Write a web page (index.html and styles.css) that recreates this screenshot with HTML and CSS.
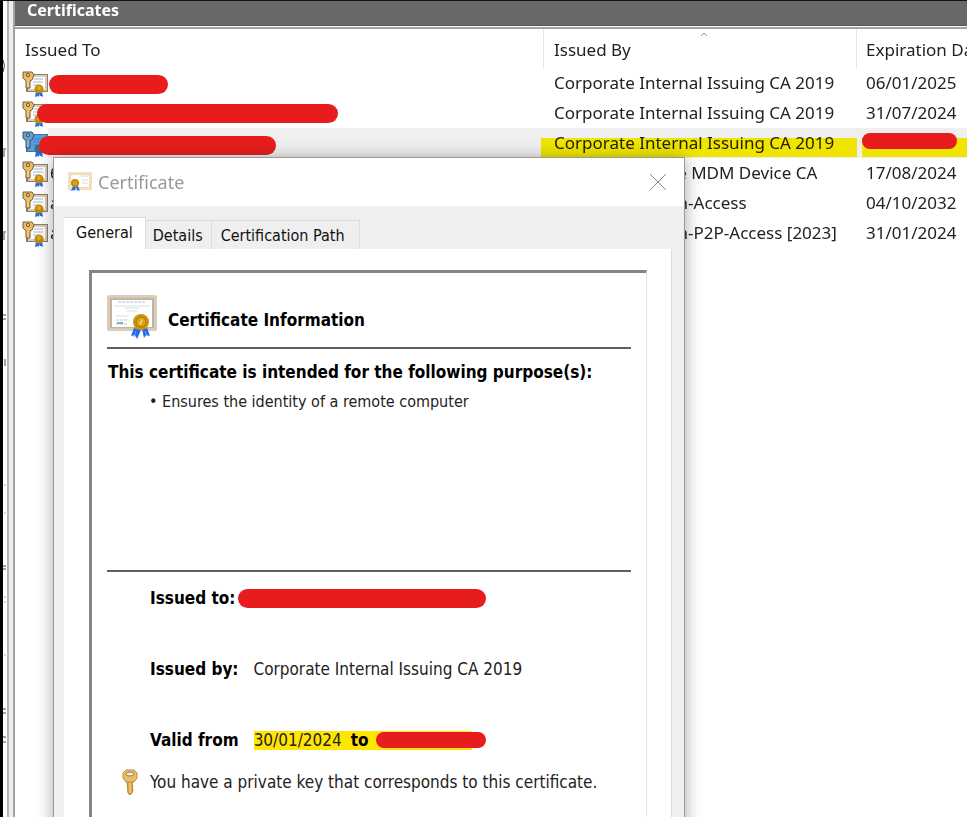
FILE: index.html
```html
<!DOCTYPE html>
<html lang="en">
<head>
    <meta charset="UTF-8">
    <meta name="viewport" content="width=device-width, initial-scale=1.0">
    <title>Certificates</title>
    <link rel="stylesheet" href="styles.css">
</head>
<body>
    <!-- shared icons -->
    <svg class="sprite" aria-hidden="true">
        <symbol id="icon-key-cert" viewBox="0 0 26 26">
            <path d="M4 3h22v18H4z" fill="#8f7c69"/>
            <path d="M6 4h19v16H6z" fill="#d9ccbd"/>
            <path d="M8 6h15v12H8z" fill="#fff"/>
            <path d="M12 8h9M11 11h10M11 14h5" stroke="#9fb9d4"/>
            <path d="M14 20l-1 6 3-1 1 1 1-5zM17 20l1 5 1 0 2 1-1-6z" fill="#1f6fe8"/>
            <circle cx="17" cy="18" r="4.500" fill="#c68a06"/>
            <circle cx="17" cy="17" r="2" fill="#e0ac25"/>
            <path d="M1 1h9l2 3-2 5-2 1v7H4v-7L1 7z" fill="#e9bd62" stroke="#7a5d38"/>
            <path d="M6 10v6" stroke="#f7dc94"/>
            <circle cx="6" cy="4" r="2" fill="#6b5030"/>
            <circle cx="6" cy="4" r="1" fill="#f8e6b0"/>
        </symbol>
        <symbol id="icon-key-cert-selected" viewBox="0 0 26 26">
            <path d="M4 3h22v18H4z" fill="#3a73b0"/>
            <path d="M6 4h19v16H6z" fill="#5c9be0"/>
            <path d="M12 8h9M11 11h10M11 14h5" stroke="#3f80c8"/>
            <path d="M14 20l-1 6 3-1 1 1 1-5zM17 20l1 5 1 0 2 1-1-6z" fill="#1f6fe8"/>
            <circle cx="17" cy="18" r="4.500" fill="#4d6578"/>
            <path d="M1 1h9l2 3-2 5-2 1v7H4v-7L1 7z" fill="#6f9cc0" stroke="#2f5578"/>
            <path d="M6 10v6" stroke="#a9cbe6"/>
            <circle cx="6" cy="4" r="2" fill="#2f5578"/>
            <circle cx="6" cy="4" r="1" fill="#a9cbe6"/>
        </symbol>
    </svg>

    <aside class="tree-edge" aria-hidden="true">
        <svg viewBox="0 0 4 816">
            <path d="M0 59q3 5 0 12M0 148h3M1 149v7M0 231h3M1 232v7M0 314h3M0 318h3M2 358v7M0 565h3M0 568h3M0 708h3M0 712h3M0 736h3M0 741h3" fill="none" stroke="#444"/>
            <path d="M1 484h2M1 512h2M1 596h2M1 601h2M1 654h2" stroke="#c9a36a"/>
        </svg>
    </aside>
    <div class="splitter"></div>

    <main class="pane">
        <h1 class="pane-title">Certificates</h1>
        <table class="cert-list">
            <colgroup>
                <col>
                <col class="col-by">
                <col class="col-date">
            </colgroup>
            <thead>
                <tr>
                    <th>Issued To</th>
                    <th>Issued By
                        <svg class="sort" viewBox="0 0 8 5" aria-hidden="true"><path d="M1 4l3-3 3 3" fill="none" stroke="#999"/></svg>
                    </th>
                    <th>Expiration Date</th>
                </tr>
            </thead>
            <tbody>
                <tr>
                    <td><svg class="icon"><use href="#icon-key-cert"/></svg><span class="redact to-1"></span></td>
                    <td>Corporate Internal Issuing CA 2019</td>
                    <td>06/01/2025</td>
                </tr>
                <tr>
                    <td><svg class="icon"><use href="#icon-key-cert"/></svg><span class="redact to-2"></span></td>
                    <td>Corporate Internal Issuing CA 2019</td>
                    <td>31/07/2024</td>
                </tr>
                <tr class="selected">
                    <td><svg class="icon"><use href="#icon-key-cert-selected"/></svg><span class="redact to-3"></span></td>
                    <td>Corporate Internal Issuing CA 2019<span class="stroke stroke-by"></span></td>
                    <td><span class="stroke stroke-date"></span><span class="redact date"></span></td>
                </tr>
                <tr>
                    <td><svg class="icon"><use href="#icon-key-cert"/></svg>6</td>
                    <td>Microsoft Intune MDM Device CA</td>
                    <td>17/08/2024</td>
                </tr>
                <tr>
                    <td><svg class="icon"><use href="#icon-key-cert"/></svg>a</td>
                    <td>MS-Organization-Access</td>
                    <td>04/10/2032</td>
                </tr>
                <tr>
                    <td><svg class="icon"><use href="#icon-key-cert"/></svg>a</td>
                    <td>MS-Organization-P2P-Access [2023]</td>
                    <td>31/01/2024</td>
                </tr>
            </tbody>
        </table>
    </main>

    <section class="dialog" role="dialog" aria-labelledby="dialog-title">
        <header class="dialog-bar">
            <svg class="dialog-icon" viewBox="0 0 24 20" aria-hidden="true">
                <path d="M0 0h24v18H0z" fill="#f3d9b4"/>
                <path d="M1 1h22v16H1z" fill="none" stroke="#fbeedb" stroke-dasharray="2 2"/>
                <path d="M3 3h18v12H3z" fill="#fff"/>
                <path d="M11 4h9M14 8h6M14 11h6" stroke="#d5dade"/>
                <path d="M5 14l-2 5 3-1 1 1 1-5zM8 14l1 5 1-1 2 1-2-5z" fill="#1f6fe8"/>
                <circle cx="7" cy="11" r="4" fill="#c78a08"/>
                <circle cx="7" cy="11" r="2" fill="#dda61a"/>
            </svg>
            <h2 id="dialog-title">Certificate</h2>
            <button class="close" aria-label="Close">
                <svg viewBox="0 0 16 16"><path d="M0 0l16 16M16 0L0 16" stroke="#888" fill="none"/></svg>
            </button>
        </header>

        <div class="tabs" role="tablist">
            <button class="tab active" role="tab" aria-selected="true">General</button>
            <button class="tab" role="tab">Details</button>
            <button class="tab" role="tab">Certification Path</button>
        </div>

        <div class="tab-page">
            <div class="sheet">
                <div class="info-head">
                    <svg class="cert-icon" viewBox="0 0 50 44" aria-hidden="true">
                        <rect width="50" height="36" rx="2" fill="#d5c8b8"/>
                        <rect x="1" y="1" width="48" height="34" rx="2" fill="none" stroke="#e6ddd1" stroke-dasharray="1 1"/>
                        <path d="M3 3h44v30H3z" fill="#c5b39f"/>
                        <path d="M5 5h40v27H5z" fill="#fff"/>
                        <path d="M11 7h27" stroke="#a9c5dc" stroke-dasharray="3 1"/>
                        <path d="M7 11h36M18 13h14M20 16h10M9 21h12" stroke="#d3dfe8"/>
                        <path d="M9 25h11M9 29h11" stroke="#bcc5cd" stroke-dasharray="3 1"/>
                        <path d="M10 28h6" stroke="#7faed6" stroke-width="2"/>
                        <path d="M27 33l-3 8 4-1 2 4 4-9zM35 34l2 9 2-3 4 1-3-8z" fill="#1f68e8"/>
                        <path d="M29 36l-2 6M38 36l2 5" stroke="#6ba4ff"/>
                        <circle cx="34" cy="27" r="8" fill="#cf930b"/>
                        <circle cx="34" cy="27" r="5" fill="#dba51a" stroke="#a87308"/>
                        <path d="M32 28l3-4 1 1-2 5z" fill="#f2d16a"/>
                    </svg>
                    <h3>Certificate Information</h3>
                </div>
                <div class="purposes">
                    <h3>This certificate is intended for the following purpose(s):</h3>
                    <ul>
                        <li>Ensures the identity of a remote computer</li>
                    </ul>
                </div>
                <dl class="fields">
                    <div class="field">
                        <dt>Issued to:</dt>
                        <dd class="hidden-name"><span class="redact subject"></span></dd>
                    </div>
                    <div class="field">
                        <dt>Issued by:</dt>
                        <dd>Corporate Internal Issuing CA 2019</dd>
                    </div>
                    <div class="field">
                        <dt>Valid from</dt>
                        <dd class="valid"><span class="highlight">30/01/2024 <b>to</b></span><span class="redact until"></span></dd>
                    </div>
                </dl>
                <p class="private-key">
                    <svg class="key" viewBox="0 0 16 26" aria-hidden="true">
                        <path d="M5 12h6l-1 3 1 2-1 2 1 2-1 3-2 2-2-2z" fill="#dba84a" stroke="#b58239"/>
                        <path d="M8 13v11" stroke="#f8dc91"/>
                        <path d="M4 1h8l3 3v5l-3 4H4L1 9V4z" fill="#e8bd66" stroke="#bd8c45"/>
                        <ellipse cx="8" cy="5" rx="4" ry="2" fill="#f4ede0" stroke="#9c7742"/>
                    </svg>
                    You have a private key that corresponds to this certificate.
                </p>
            </div>
        </div>
    </section>
</body>
</html>
```
FILE: styles.css
```css
* {
    box-sizing: border-box;
}

body {
    display: flex;
    height: 100vh;
    margin: 0;
    overflow: hidden;
    position: relative;
    background: #fff;
    border-top: 1px solid #111;
    color: #222;
    font-family: "Noto Sans", sans-serif;
    font-size: 17px;
}

h1, h2, h3, p, ul, dl, dd {
    margin: 0;
    padding: 0;
}

.sprite {
    position: absolute;
    width: 0;
    height: 0;
}

/* edge of the console tree and the splitter */
.tree-edge {
    width: 7px;
    overflow: hidden;
    border-left: 3px solid #000;
    background: #fff;
}

.tree-edge svg {
    display: block;
    width: 4px;
}

.splitter {
    width: 6px;
    background: #eee;
    border-left: 2px solid #b0b3b8;
}

.pane {
    flex: 1;
    min-width: 0;
    overflow: hidden;
    border-left: 2px solid #a0a3a8;
}

.pane-title {
    height: 25px;
    padding-left: 12px;
    background: #696969;
    color: #fff;
    font-size: 16px;
    line-height: 19px;
    border-bottom: 1px solid #555;
}

.cert-list {
    width: 100%;
    margin-top: 1px;
    table-layout: fixed;
    border-spacing: 0;
    border-top: 2px solid #a0a3a8;
}

.col-by {
    width: 313px;
}

.col-date {
    width: 110px;
}

.cert-list th {
    position: relative;
    height: 39px;
    padding: 2px 0 0 10px;
    font-weight: normal;
    text-align: left;
    white-space: nowrap;
    border-right: 1px solid #e5e5e5;
}

.cert-list th:last-child {
    border-right: none;
}

.sort {
    position: absolute;
    top: 3px;
    left: 50%;
    width: 8px;
    height: 5px;
}

.cert-list td {
    position: relative;
    height: 30px;
    padding: 0 0 0 10px;
    line-height: 28px;
    white-space: nowrap;
}

.cert-list td:first-child {
    padding-left: 7px;
}

.cert-list th:last-child,
.cert-list td:last-child {
    padding-left: 9px;
}

.icon {
    width: 26px;
    height: 26px;
    margin-right: 2px;
    vertical-align: middle;
}

.selected td {
    background: #efefef;
}

.selected td:first-child {
    background: linear-gradient(to right, #fff 33px, #efefef 33px);
}

/* yellow marker, drawn across the row */
.stroke {
    position: absolute;
    top: 10px;
    bottom: 1px;
    background: #fff500;
    mix-blend-mode: multiply;
}

.stroke-by {
    left: -3px;
    right: 0;
}

.stroke-date {
    left: 5px;
    right: 0;
}

.redact {
    display: block;
    height: 19px;
    border-radius: 10px;
    background: #e71d1d;
}

/* marker strokes lie over the row they hide */
.cert-list .redact {
    position: absolute;
}

.to-1 {
    top: 7px;
    left: 34px;
    width: 119px;
}

.to-2 {
    top: 6px;
    left: 22px;
    width: 301px;
}

.to-3 {
    top: 8px;
    left: 24px;
    width: 237px;
}

.cert-list .date {
    top: 5px;
    left: 5px;
    width: 95px;
    height: 16px;
}

/* certificate window */
.dialog {
    position: absolute;
    top: 156px;
    left: 53px;
    bottom: -40px;
    width: 632px;
    display: flex;
    flex-direction: column;
    background: #efefef;
    border: 1px solid #999;
    box-shadow: 0 2px 16px rgba(0, 0, 0, 0.35);
}

.dialog-bar {
    display: flex;
    align-items: center;
    height: 48px;
    flex: none;
    padding: 0 18px 0 14px;
    background: #fff;
}

.dialog-icon {
    width: 24px;
    height: 20px;
    margin-right: 6px;
}

.dialog-bar h2 {
    flex: 1;
    color: #999;
    font-size: 18px;
    font-weight: normal;
}

.close {
    width: 16px;
    height: 16px;
    padding: 0;
    border: none;
    background: none;
}

.close svg {
    display: block;
}

.tabs {
    display: flex;
    align-items: flex-end;
    flex: none;
    height: 43px;
    padding-left: 10px;
}

.tab {
    height: 29px;
    padding: 0 8px 0 7px;
    border: 1px solid #dcdcdc;
    border-width: 1px 1px 0 0;
    background: #efefef;
    color: #111;
    font-family: "DejaVu Sans Condensed", "DejaVu Sans", sans-serif;
    font-size: 16px;
}

.tab:last-child {
    padding: 0 14px 0 9px;
}

.tab.active {
    height: 32px;
    padding: 0 12px 2px;
    background: #fff;
}

.tab-page {
    flex: 1;
    margin: 0 12px 0 10px;
    padding: 21px 24px 0 25px;
    background: #fff;
    border-right: 1px solid #dcdcdc;
    font-family: "DejaVu Sans Condensed", "DejaVu Sans", sans-serif;
    font-size: 17px;
}

.sheet {
    height: 100%;
    padding: 21px 15px 0;
    border: solid #858585;
    border-width: 3px 1px 0 3px;
    border-right-color: #e3e3e3;
}

.sheet h3 {
    color: #000;
    font-size: 17px;
    line-height: 24px;
}

.info-head {
    display: flex;
    align-items: center;
    gap: 11px;
    height: 55px;
    padding-bottom: 8px;
    border-bottom: 2px solid #606060;
}

.info-head h3 {
    padding-top: 6px;
}

.cert-icon {
    width: 50px;
    height: 44px;
}

.purposes {
    height: 223px;
    padding: 11px 0 0 1px;
    border-bottom: 2px solid #606060;
}

.purposes ul {
    margin-top: 6px;
    padding-left: 41px;
    list-style: none;
    font-size: 16px;
    line-height: 24px;
}

.purposes li::before {
    content: "• ";
}

.fields {
    display: grid;
    gap: 47px;
    padding: 14px 0 0 43px;
    line-height: 24px;
}

.field {
    display: flex;
    align-items: center;
}

.field dt {
    min-width: 88px;
    color: #000;
    font-weight: bold;
}

.field dd {
    margin-left: 15px;
}

.field .hidden-name {
    margin-left: 0;
}

.subject {
    width: 248px;
}

.valid {
    display: flex;
    align-items: center;
}

.highlight {
    height: 19px;
    padding-right: 104px;
    background: #ffe600;
    line-height: 19px;
}

.highlight b {
    margin-left: 4px;
    color: #000;
}

/* runs over the end of the highlight */
.until {
    width: 110px;
    height: 16px;
    margin-left: -96px;
}

.private-key {
    display: flex;
    align-items: center;
    gap: 12px;
    margin-top: 17px;
    padding-left: 15px;
    white-space: nowrap;
}

.key {
    width: 16px;
    height: 26px;
}
```
